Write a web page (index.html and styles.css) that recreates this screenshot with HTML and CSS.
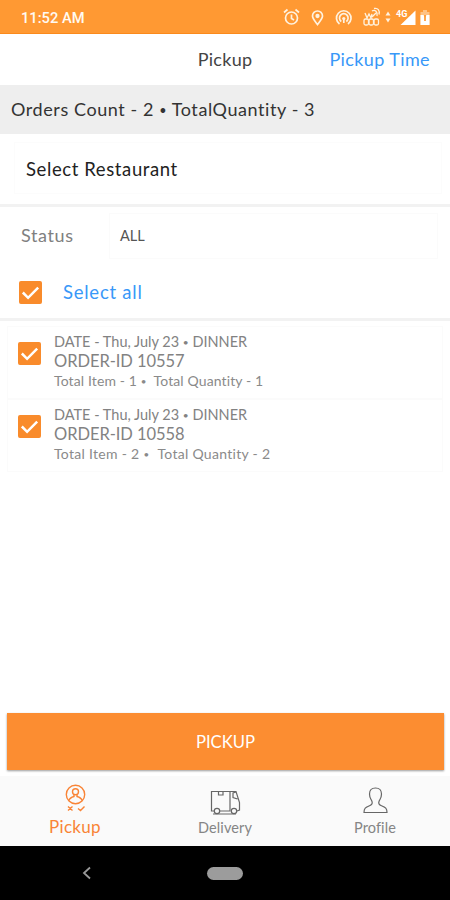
FILE: index.html
```html
<!DOCTYPE html>
<html lang="en">
<head>
    <meta charset="UTF-8">
    <meta name="viewport" content="width=device-width, initial-scale=1.0">
    <title>Pickup</title>
    <link rel="stylesheet" href="styles.css">
</head>
<body>
    <div class="status-bar">
        <span class="clock">11:52 AM</span>
        <svg class="status-icons" width="150" height="22" viewBox="0 0 150 22" fill="none" stroke="#fff2df" stroke-width="1.7">
            <!-- alarm -->
            <circle cx="10.500" cy="11" r="6"/>
            <path d="M10.500 7.500v4l2.500 1.500M3 5.500l3.500-3M18 5.500l-3.500-3"/>
            <!-- location -->
            <path d="M36.500 17.500c-3-4-5-6-5-8.500a5 5 0 0 1 10 0c0 2.500-2 4.500-5 8.500z"/>
            <circle cx="36.500" cy="9" r="1.300" fill="#fff2df"/>
            <!-- hotspot -->
            <path d="M58.500 17a7.300 7.300 0 1 1 8.500 0M60.300 14.500a4.300 4.300 0 1 1 5 0"/>
            <circle cx="62.800" cy="11.500" r="1.600" fill="#fff2df" stroke="none"/>
            <path d="M62.800 12v4"/>
            <!-- modem -->
            <g stroke-width="1.300">
                <rect x="83" y="12" width="4.500" height="6" rx="1.500"/>
                <rect x="88" y="12" width="4.500" height="6" rx="1.500"/>
                <rect x="93" y="12" width="4.500" height="6" rx="1.500"/>
                <path d="M84 6l2 5 2-4 2 4 1-4M91 10l4-4M91 4c3-2 6 1 5 5M93 1.500c4-1 6 2 5 6"/>
            </g>
            <path d="M104.500 8.500l2.500-4 2.500 4zM104.500 11.500l2.500 4 2.500-4z" fill="#fff2df" stroke="none"/>
            <!-- signal -->
            <path d="M119.500 18L134.500 3.500V18z" fill="#fff" stroke="none"/>
            <text class="network" x="115" y="9.500">4G</text>
            <!-- battery -->
            <path d="M139.500 5h2.500V3h4v2h2.500v13h-9z" fill="#fff" fill-opacity=".4" stroke="none"/>
            <path d="M139.500 8h3l1.500 3 1.500-3h3v10h-9z" fill="#fff" stroke="none"/>
            <path d="M144 8v6" stroke="#ff9933"/>
        </svg>
    </div>

    <header class="header">
        <h1 class="title">Pickup</h1>
        <a class="pickup-time">Pickup Time</a>
    </header>

    <div class="summary">Orders Count - 2 <span class="dot">•</span> TotalQuantity - 3</div>

    <div class="restaurant">
        <div class="restaurant-select">Select Restaurant</div>
    </div>

    <div class="filters">
        <div class="status-row">
            <span class="status-label">Status</span>
            <div class="status-select">ALL</div>
        </div>
        <div class="select-all">
            <svg class="checkbox" viewBox="0 0 24 24"><rect width="24" height="24" rx="2"/><path d="M4 12l5.500 5.500L20 7"/></svg>
            <span class="select-all-label">Select all</span>
        </div>
    </div>

    <main class="orders">
        <div class="order">
            <svg class="checkbox" viewBox="0 0 24 24"><rect width="24" height="24" rx="2"/><path d="M4 12l5.500 5.500L20 7"/></svg>
            <div>
                <div class="order-date">DATE - Thu, July 23 <span class="dot">•</span> DINNER</div>
                <div class="order-id">ORDER-ID 10557</div>
                <div class="order-total"><span>Total Item - 1 <span class="dot">•</span></span><span>Total Quantity - 1</span></div>
            </div>
        </div>
        <div class="order">
            <svg class="checkbox" viewBox="0 0 24 24"><rect width="24" height="24" rx="2"/><path d="M4 12l5.500 5.500L20 7"/></svg>
            <div>
                <div class="order-date">DATE - Thu, July 23 <span class="dot">•</span> DINNER</div>
                <div class="order-id">ORDER-ID 10558</div>
                <div class="order-total wide"><span>Total Item - 2 <span class="dot">•</span></span><span>Total Quantity - 2</span></div>
            </div>
        </div>
    </main>

    <button class="pickup-btn">PICKUP</button>

    <nav class="tabs">
        <a class="tab active">
            <svg width="30" height="32" viewBox="0 0 30 32">
                <circle cx="15.500" cy="11.500" r="9.200"/>
                <circle cx="15.500" cy="8.700" r="3"/>
                <path d="M14 11.500v2c-3 .8-4.500 2-5 4M17 11.500v2c3 .8 4.500 2 5 4"/>
                <path d="M8 23.500l4.500 4M12.500 23.500l-4.500 4M18 25.500l2.500 2 4-4"/>
            </svg>
            <span>Pickup</span>
        </a>
        <a class="tab">
            <svg width="32" height="32" viewBox="0 0 32 32">
                <path d="M5 27H2.500V7.500H21V27H11M21 7.500h6l3.500 11V26l-2.500 1M9.500 7.500V11h4.500V7.500M27 8l-3 1v4.500l4.500 1.500M4 30h23"/>
                <circle cx="8" cy="27" r="2.700"/>
                <circle cx="25" cy="27" r="2.700"/>
            </svg>
            <span>Delivery</span>
        </a>
        <a class="tab">
            <svg width="32" height="32" viewBox="0 0 32 32">
                <path d="M16.500 4c-4 0-6 2.500-6 6 0 4 1.500 5 2.500 7.500.8 2-.5 3.500-2.500 4.300-4 1.500-5.500 2.500-5.500 6.700h23c0-4.200-1.500-5.200-5.500-6.700-2-.8-3.300-2.300-2.500-4.300 1-2.500 2.500-3.500 2.500-7.500 0-3.500-2-6-6-6z"/>
            </svg>
            <span>Profile</span>
        </a>
    </nav>

    <div class="nav-bar">
        <svg class="back" width="10" height="14" viewBox="0 0 10 14"><path d="M8 1.500L2 7l6 5.500"/></svg>
        <span class="home-pill"></span>
    </div>
</body>
</html>
```

FILE: styles.css
```css
* { box-sizing: border-box; }
body { margin: 0; height: 900px; display: flex; flex-direction: column; background: #fff; font-family: Lato, "Open Sans", sans-serif; font-variant-ligatures: none; color: #333; white-space: nowrap; overflow: hidden; }
.dot { font-size: 0.7em; vertical-align: 0.1em; }

.status-bar { height: 34px; flex: none; display: flex; justify-content: space-between; padding: 7px 19px 0 21px; background: #ff9933; border-bottom: 1px solid #fb8a1c; }
.clock { font: 500 14.7px/23px Roboto, sans-serif; color: #fffaf2; }
.network { font: bold 9px Roboto, sans-serif; fill: #fff; stroke: none; }

.header { height: 51px; flex: none; display: grid; grid-template-columns: 1fr auto 1fr; align-items: center; padding: 0 20px 2px 0; }
.title { grid-column: 2; margin: 0 -20px 0 0; font-size: 18px; font-weight: 400; letter-spacing: 0.3px; color: #444; }
.pickup-time { text-align: right; font-size: 18px; letter-spacing: 0.4px; color: #3898f8; }

.summary { height: 49px; flex: none; padding-left: 11px; background: #eee; font-size: 18px; line-height: 48px; letter-spacing: 0.58px; }

.restaurant { height: 73px; flex: none; padding: 8px 8px 11px 14px; border-bottom: 3px solid #f2f2f2; }
.restaurant-select { height: 52px; padding-left: 11px; border: 1px solid #fcfcfc; font-size: 18.5px; line-height: 53px; letter-spacing: 0.6px; color: #222; }

.filters { height: 114px; flex: none; border-bottom: 3px solid #f2f2f2; }
.status-row { display: flex; align-items: center; padding: 6px 12px 0 21px; }
.status-label { width: 88px; padding-bottom: 2px; font-size: 18px; letter-spacing: 0.6px; color: #808080; }
.status-select { flex: 1; height: 46px; padding-left: 10px; border: 1px solid #fbfbfb; font-size: 14.5px; line-height: 44px; color: #555; }
.select-all { display: flex; align-items: center; gap: 21px; height: 60px; padding: 7px 0 0 19px; }
.select-all-label { padding-bottom: 2px; font-size: 18.5px; letter-spacing: 0.75px; color: #3898f8; }

.checkbox { width: 23px; height: 23px; flex: none; fill: #f98b2b; }
.checkbox path { fill: none; stroke: #fff; stroke-width: 2.6; }

.orders { flex: 1; padding: 5px 7px; }
.order { height: 73px; display: flex; gap: 13px; padding: 6px 0 0 10px; border: 1px solid #fbfbfb; color: #828282; }
.order .checkbox { margin-top: 9px; }
.order-date { font-size: 14.5px; line-height: 18px; }
.order-id { font-size: 16.5px; line-height: 21px; letter-spacing: -0.05px; }
.order-total { display: flex; gap: 7px; font-size: 14px; line-height: 18px; letter-spacing: 0.12px; color: #8a8a8a; }
.order-total.wide { gap: 8px; letter-spacing: 0.3px; }

.pickup-btn { height: 57px; flex: none; margin: 0 6px 6px 7px; padding: 0; border: 0; background: #fc8d31; box-shadow: 0 1px 2px rgba(0, 0, 0, 0.4); font: 16.7px Lato, sans-serif; color: #fff; }

.tabs { height: 70px; flex: none; display: grid; grid-template-columns: repeat(3, 1fr); background: #fafafa; }
.tab { display: flex; flex-direction: column; align-items: center; padding-top: 9px; font-size: 14.5px; line-height: 24px; letter-spacing: 0.1px; color: #858585; }
.tab svg { margin-top: -1px; fill: none; stroke: #666; stroke-width: 1.2; }
.tab.active { font-size: 17px; letter-spacing: 0.3px; color: #f98436; }
.tab.active svg { margin-top: -2px; stroke: #f98436; stroke-width: 1.4; }

.nav-bar { height: 54px; flex: none; display: grid; grid-template-columns: 1fr 36px 1fr; align-items: center; background: #000; }
.back { justify-self: start; margin-left: 82px; fill: none; stroke: #999; stroke-width: 1.8; }
.home-pill { height: 13px; border-radius: 7px; background: #9c9c9c; }
```
